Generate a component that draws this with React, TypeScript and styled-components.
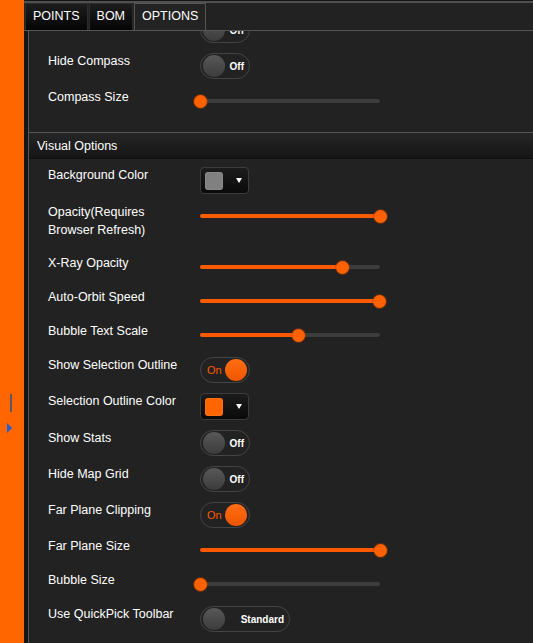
import styled, { createGlobalStyle } from 'styled-components';

const Accent = '#ff5a00';

const GlobalStyle = createGlobalStyle`
  html, body {
    margin: 0;
    padding: 0;
    background: #222;
  }
  body {
    font-family: "Liberation Sans", Arial, sans-serif;
  }
`;

const Page = styled.div`
  display: flex;
  height: 100vh;
  overflow: hidden;
`;

const SideStrip = styled.div`
  width: 24px;
  flex: none;
  background: #ff6600;
  display: flex;
  flex-direction: column;
  align-items: flex-start;
  gap: 11px;
  padding-top: 394px;
  box-sizing: border-box;
`;

const Grip = styled.div`
  width: 2px;
  height: 18px;
  margin-left: 10px;
  background: #5a5a66;
`;

const Caret = styled.div`
  width: 0;
  height: 0;
  margin-left: 7px;
  border-top: 5px solid transparent;
  border-bottom: 5px solid transparent;
  border-left: 5px solid #1f5fd6;
`;

const Panel = styled.div`
  flex: 1;
  min-width: 0;
  display: flex;
  flex-direction: column;
  background: #151515;
  padding-top: 1px;
`;

const TabBar = styled.div`
  flex: none;
  display: flex;
  gap: 1px;
  height: 27px;
  padding-left: 1px;
  border-top: 2px solid #505050;
  border-bottom: 1px solid #555;
  background: #222;
`;

const Tab = styled.div<{ $active?: boolean }>`
  display: flex;
  align-items: center;
  padding: 0 7px 2px;
  font-size: 12.5px;
  color: #fff;
  border: 1px solid ${p => (p.$active ? '#555' : '#2c2c2c')};
  border-bottom: none;
  background: ${p => (p.$active ? '#232323' : 'linear-gradient(#1d1d1d, #050505)')};
`;

const Content = styled.div`
  flex: 1;
  display: flex;
  flex-direction: column;
  margin-left: 4px;
  border-left: 1px solid #555;
  background: #222;
  overflow: hidden;
`;

const Group = styled.div<{ $top: number }>`
  flex: none;
  margin-top: ${p => Math.min(p.$top, 0)}px;
  padding: ${p => Math.max(p.$top, 0)}px 0 9px 19px;
`;

const Row = styled.div`
  display: flex;
  align-items: flex-start;
  margin-bottom: 10px;
`;

const Label = styled.div`
  box-sizing: border-box;
  width: 152px;
  flex: none;
  margin-top: -1px;
  padding: 0 12px 6px 0;
  line-height: 18px;
  font-size: 12.5px;
  color: #fff;
`;

const SectionHeader = styled.div`
  flex: none;
  height: 25px;
  display: flex;
  align-items: center;
  padding-left: 8px;
  font-size: 12.5px;
  color: #fff;
  border-top: 1px solid #555;
  border-bottom: 1px solid #101010;
  background: linear-gradient(#262626, #151515);
`;

/* toggle */

const ToggleTrack = styled.div<{ $on?: boolean; $width: number }>`
  box-sizing: border-box;
  width: ${p => p.$width}px;
  height: 26px;
  padding: 0 2px;
  border: 1px solid #444;
  border-radius: 13px;
  background: #222;
  display: flex;
  align-items: center;
  justify-content: space-between;
  flex-direction: ${p => (p.$on ? 'row-reverse' : 'row')};
`;

const Knob = styled.div<{ $on?: boolean }>`
  width: 22px;
  height: 22px;
  border-radius: 50%;
  background: ${p =>
    p.$on ? 'linear-gradient(#ff6d12, #ee5600)' : 'linear-gradient(#585858, #3c3c3c)'};
`;

const ToggleText = styled.span<{ $on?: boolean }>`
  font-size: ${p => (p.$on ? 11 : 10)}px;
  font-weight: ${p => (p.$on ? 400 : 700)};
  color: ${p => (p.$on ? Accent : '#fff')};
  margin: ${p => (p.$on ? '0 0 0 4px' : '0 3px 0 0')};
`;

function Toggle({ on, text, width = 50 }: { on?: boolean; text?: string; width?: number }) {
  return (
    <ToggleTrack $on={on} $width={width}>
      <Knob $on={on} />
      <ToggleText $on={on}>{text ?? (on ? 'On' : 'Off')}</ToggleText>
    </ToggleTrack>
  );
}

/* slider */

const SliderBox = styled.div`
  position: relative;
  width: 180px;
  height: 24px;
  display: flex;
  align-items: center;
`;

const Track = styled.div`
  width: 100%;
  height: 4px;
  border-radius: 2px;
  background: #3d3d3d;
  overflow: hidden;
`;

const Fill = styled.div`
  height: 100%;
  background: ${Accent};
`;

const Thumb = styled.div`
  position: absolute;
  top: 50%;
  width: 13px;
  height: 13px;
  margin: -6.5px 0 0 -6.5px;
  border-radius: 50%;
  background: #ff6100;
  box-shadow: 0 0 0 1px rgba(170, 60, 0, 0.45);
`;

function Slider({ value }: { value: number }) {
  const pct = `${value * 100}%`;
  return (
    <SliderBox>
      <Track>
        <Fill style={{ width: pct }} />
      </Track>
      <Thumb style={{ left: pct }} />
    </SliderBox>
  );
}

/* colour picker */

const Picker = styled.div`
  box-sizing: border-box;
  width: 49px;
  height: 27px;
  padding: 0 6px 0 4px;
  border: 1px solid #3c3c3c;
  border-radius: 4px;
  background: linear-gradient(#1c1c1c, #0a0a0a);
  display: flex;
  align-items: center;
  justify-content: space-between;
`;

const Swatch = styled.div<{ $color: string }>`
  width: 18px;
  height: 18px;
  border-radius: 3px;
  background: ${p => p.$color};
  box-shadow: inset 0 0 0 1px rgba(255, 255, 255, 0.07);
`;

const Arrow = styled.div`
  width: 0;
  height: 0;
  border-left: 3.5px solid transparent;
  border-right: 3.5px solid transparent;
  border-top: 5px solid #fff;
`;

function ColorPicker({ color }: { color: string }) {
  return (
    <Picker>
      <Swatch $color={color} />
      <Arrow />
    </Picker>
  );
}

export default function App() {
  return (
    <Page>
      <GlobalStyle />
      <SideStrip>
        <Grip />
        <Caret />
      </SideStrip>

      <Panel>
        <TabBar>
          <Tab>POINTS</Tab>
          <Tab>BOM</Tab>
          <Tab $active>OPTIONS</Tab>
        </TabBar>

        <Content>
          {/* list is scrolled: the first row sits mostly under the tab bar */}
          <Group $top={-14}>
            <Row>
              <Label />
              <Toggle />
            </Row>
            <Row>
              <Label>Hide Compass</Label>
              <Toggle />
            </Row>
            <Row>
              <Label>Compass Size</Label>
              <Slider value={0} />
            </Row>
          </Group>

          <SectionHeader>Visual Options</SectionHeader>
          <Group $top={8}>
            <Row>
              <Label>Background Color</Label>
              <ColorPicker color="#808080" />
            </Row>
            <Row>
              <Label>Opacity(Requires Browser Refresh)</Label>
              <Slider value={1} />
            </Row>
            <Row>
              <Label>X-Ray Opacity</Label>
              <Slider value={0.79} />
            </Row>
            <Row>
              <Label>Auto-Orbit Speed</Label>
              <Slider value={0.995} />
            </Row>
            <Row>
              <Label>Bubble Text Scale</Label>
              <Slider value={0.545} />
            </Row>
            <Row>
              <Label>Show Selection Outline</Label>
              <Toggle on />
            </Row>
            <Row>
              <Label>Selection Outline Color</Label>
              <ColorPicker color="#ff6600" />
            </Row>
            <Row>
              <Label>Show Stats</Label>
              <Toggle />
            </Row>
            <Row>
              <Label>Hide Map Grid</Label>
              <Toggle />
            </Row>
            <Row>
              <Label>Far Plane Clipping</Label>
              <Toggle on />
            </Row>
            <Row>
              <Label>Far Plane Size</Label>
              <Slider value={1} />
            </Row>
            <Row>
              <Label>Bubble Size</Label>
              <Slider value={0} />
            </Row>
            <Row>
              <Label>Use QuickPick Toolbar</Label>
              <Toggle text="Standard" width={90} />
            </Row>
          </Group>
        </Content>
      </Panel>
    </Page>
  );
}
